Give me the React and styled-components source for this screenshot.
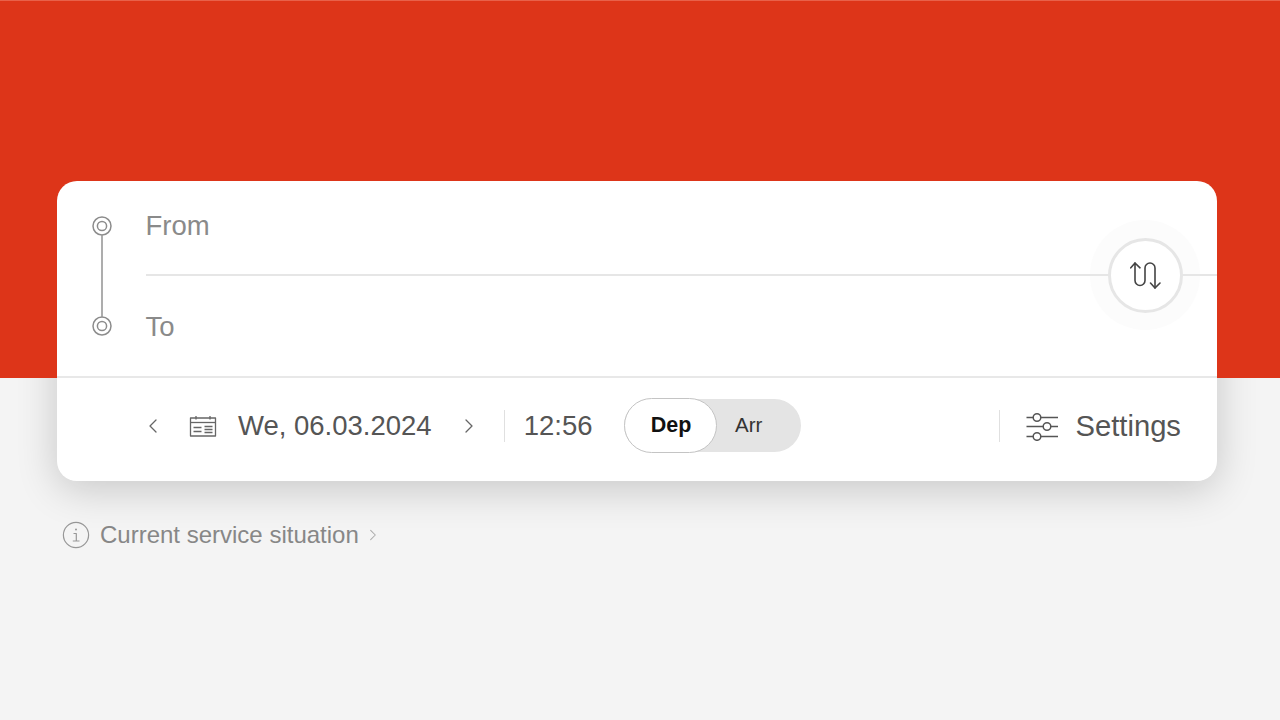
import React from "react";
import styled, { createGlobalStyle } from "styled-components";

const Global = createGlobalStyle`
  html, body { margin: 0; padding: 0; }
  body { font-family: "Liberation Sans", Arial, sans-serif; }
`;

const Page = styled.div`
  width: 1280px;
  height: 720px;
  overflow: hidden;
  box-sizing: border-box;
  padding: 181px 63px 0 57px;
  background: linear-gradient(#e8614a 1px, #dd3519 1px, #dd3519 378px, #f4f4f4 378px);
`;

const Card = styled.section`
  position: relative;
  height: 300px;
  display: flex;
  flex-direction: column;
  background: #fff;
  border-radius: 20px;

  &::before {
    content: "";
    position: absolute;
    inset: 0;
    border-radius: 20px;
    box-shadow: 0 8px 40px rgba(0, 0, 0, 0.19);
    clip-path: inset(197px -70px -70px -70px);
    pointer-events: none;
  }
`;

const Journey = styled.div`
  position: relative;
  z-index: 1;
  height: 197px;
  flex: none;
  display: flex;
  box-sizing: border-box;
  border-bottom: 2px solid #e8e8e8;
`;

const RouteColumn = styled.div`
  width: 88.5px;
  flex: none;
  display: flex;
  justify-content: flex-start;
  padding: 34px 0 0 34px;
  box-sizing: border-box;
`;

const Fields = styled.div`
  flex: 1;
  display: flex;
  flex-direction: column;
`;

const Field = styled.div`
  display: flex;
  align-items: center;
  height: ${(p) => p.$h}px;
  box-sizing: border-box;
  padding: ${(p) => p.$pt || 0}px 0 ${(p) => p.$pb || 0}px;
  font-size: 27.5px;
  color: #8a8a8a;
  border-bottom: ${(p) => (p.$line ? "2px solid #e6e6e6" : "none")};
`;

const SwapHalo = styled.div`
  position: absolute;
  left: 1033px;
  top: 39px;
  width: 110px;
  height: 110px;
  border-radius: 50%;
  background: #fcfcfc;
`;

const SwapButton = styled.button`
  position: absolute;
  z-index: 2;
  left: 1051px;
  top: 57px;
  width: 75px;
  height: 75px;
  padding: 0;
  box-sizing: border-box;
  border-radius: 50%;
  border: 3px solid #e6e6e6;
  background: #fff;
  display: flex;
  align-items: center;
  justify-content: center;
`;

const Controls = styled.div`
  flex: 1;
  display: flex;
  align-items: center;
  padding: 0 36px 7px 87px;
  color: #555;
  font-size: 27.5px;
`;

const Plain = styled.span`
  display: flex;
  flex: none;
  margin-left: ${(p) => p.$ml || 0}px;
`;

const Sep = styled.div`
  width: 1px;
  height: 32px;
  flex: none;
  background: #e0e0e0;
  margin-left: ${(p) => p.$ml || 0}px;
`;

const Toggle = styled.div`
  width: 177px;
  height: 53px;
  margin: -2px 0 0 31px;
  flex: none;
  display: flex;
  align-items: center;
  background: #e4e4e4;
  border-radius: 27px;
`;

const Thumb = styled.div`
  width: 93px;
  height: 55px;
  margin: -1px 0;
  padding-left: 2px;
  box-sizing: border-box;
  display: flex;
  align-items: center;
  justify-content: center;
  background: #fff;
  border: 1px solid #c4c4c4;
  border-radius: 28px;
  font-size: 21.5px;
  font-weight: 700;
  color: #111;
`;

const ArrLabel = styled.span`
  margin-left: 18.5px;
  font-size: 20.5px;
  color: #333;
`;

const Settings = styled.span`
  margin-left: 17px;
  font-size: 29.2px;
`;

const Service = styled.div`
  display: flex;
  align-items: center;
  margin: 40px 0 0 5px;
  color: #878787;
  font-size: 24px;
`;

const ServiceText = styled.span`
  margin-left: 10px;
`;

const Stroke = { fill: "none", stroke: "currentColor", strokeLinecap: "round", strokeLinejoin: "round" };

const Route = () => (
  <svg width="22" height="122" viewBox="0 0 22 122" color="#8c8c8c" style={{ display: "block" }}>
    <g {...Stroke} strokeWidth="1.5">
      <circle cx="11" cy="11" r="9" />
      <circle cx="11" cy="11" r="4.6" />
      <circle cx="11" cy="111" r="9" />
      <circle cx="11" cy="111" r="4.6" />
    </g>
    <path d="M11 20V102" stroke="#999" strokeWidth="1.6" />
  </svg>
);

const Chevron = ({ dir, size = 18, color = "#666", sw = 1.3 }) => (
  <svg width={size} height={size} viewBox="0 0 18 18" color={color}>
    <path {...Stroke} strokeWidth={sw} d={dir === "left" ? "M12 3 L6 9 L12 15" : "M6 3 L12 9 L6 15"} />
  </svg>
);

const Calendar = () => (
  <svg width="28" height="24" viewBox="0 0 28 24" color="#666">
    <g {...Stroke} strokeWidth="1.3" strokeLinecap="butt">
      <rect x="1.5" y="4" width="25" height="18" />
      <path d="M1.5 8.5H26.5" />
      <path d="M7 2V5.5M21 2V5.5" />
      <path d="M4.5 13.5H12.5M4.5 17.5H12.5M15.5 12.5H23.5M15.5 15.5H23.5M15.5 18.5H23.5" />
    </g>
  </svg>
);

const Sliders = () => (
  <svg width="33" height="30" viewBox="0 0 33 30" color="#555">
    <g {...Stroke} strokeWidth="1.5" strokeLinecap="butt">
      <path d="M0.5 6.5H7M15 6.5H32" />
      <circle cx="11" cy="6.5" r="3.8" />
      <path d="M0.5 15.5H17M25 15.5H32" />
      <circle cx="21" cy="15.5" r="3.8" />
      <path d="M0.5 25.5H7M15 25.5H32" />
      <circle cx="11" cy="25.5" r="3.8" />
    </g>
  </svg>
);

const SwapIcon = () => (
  <svg width="31" height="27" viewBox="0 0 31 27" color="#444">
    <g {...Stroke} strokeWidth="1.6">
      <path d="M0.8 5.8 L5 1 L10 5.8" />
      <path d="M5 1 V18.5 a5 5 0 0 0 10 0 V6 a5 5 0 0 1 10 0 V26" />
      <path d="M20.5 21 L25 26 L30 21" />
    </g>
  </svg>
);

const InfoIcon = () => (
  <svg width="28" height="28" viewBox="0 0 28 28" color="#979797">
    <circle cx="14" cy="14" r="12.6" fill="none" stroke="currentColor" strokeWidth="1.2" />
    <path {...Stroke} strokeWidth="1.2" strokeLinecap="butt" d="M11.5 12.5H14.3V20M10.8 20H17.5" />
    <circle cx="14" cy="8.5" r="1" fill="currentColor" />
  </svg>
);

export default function App() {
  return (
    <Page>
      <Global />
      <Card>
        <SwapHalo />
        <Journey>
          <RouteColumn>
            <Route />
          </RouteColumn>
          <Fields>
            <Field $h={95} $pb={3} $line>From</Field>
            <Field $h={100} $pt={2}>To</Field>
          </Fields>
        </Journey>
        <SwapButton aria-label="Swap">
          <SwapIcon />
        </SwapButton>
        <Controls>
          <Plain><Chevron dir="left" /></Plain>
          <Plain $ml={27}><Calendar /></Plain>
          <Plain $ml={21}>We, 06.03.2024</Plain>
          <Plain $ml={28}><Chevron dir="right" /></Plain>
          <Sep $ml={26} />
          <Plain $ml={19}>12:56</Plain>
          <Toggle>
            <Thumb>Dep</Thumb>
            <ArrLabel>Arr</ArrLabel>
          </Toggle>
          <Sep $ml={198} />
          <Plain $ml={26}><Sliders /></Plain>
          <Settings>Settings</Settings>
        </Controls>
      </Card>
      <Service>
        <InfoIcon />
        <ServiceText>Current service situation</ServiceText>
        <Plain $ml={7}><Chevron dir="right" size={14} color="#aaa" /></Plain>
      </Service>
    </Page>
  );
}
